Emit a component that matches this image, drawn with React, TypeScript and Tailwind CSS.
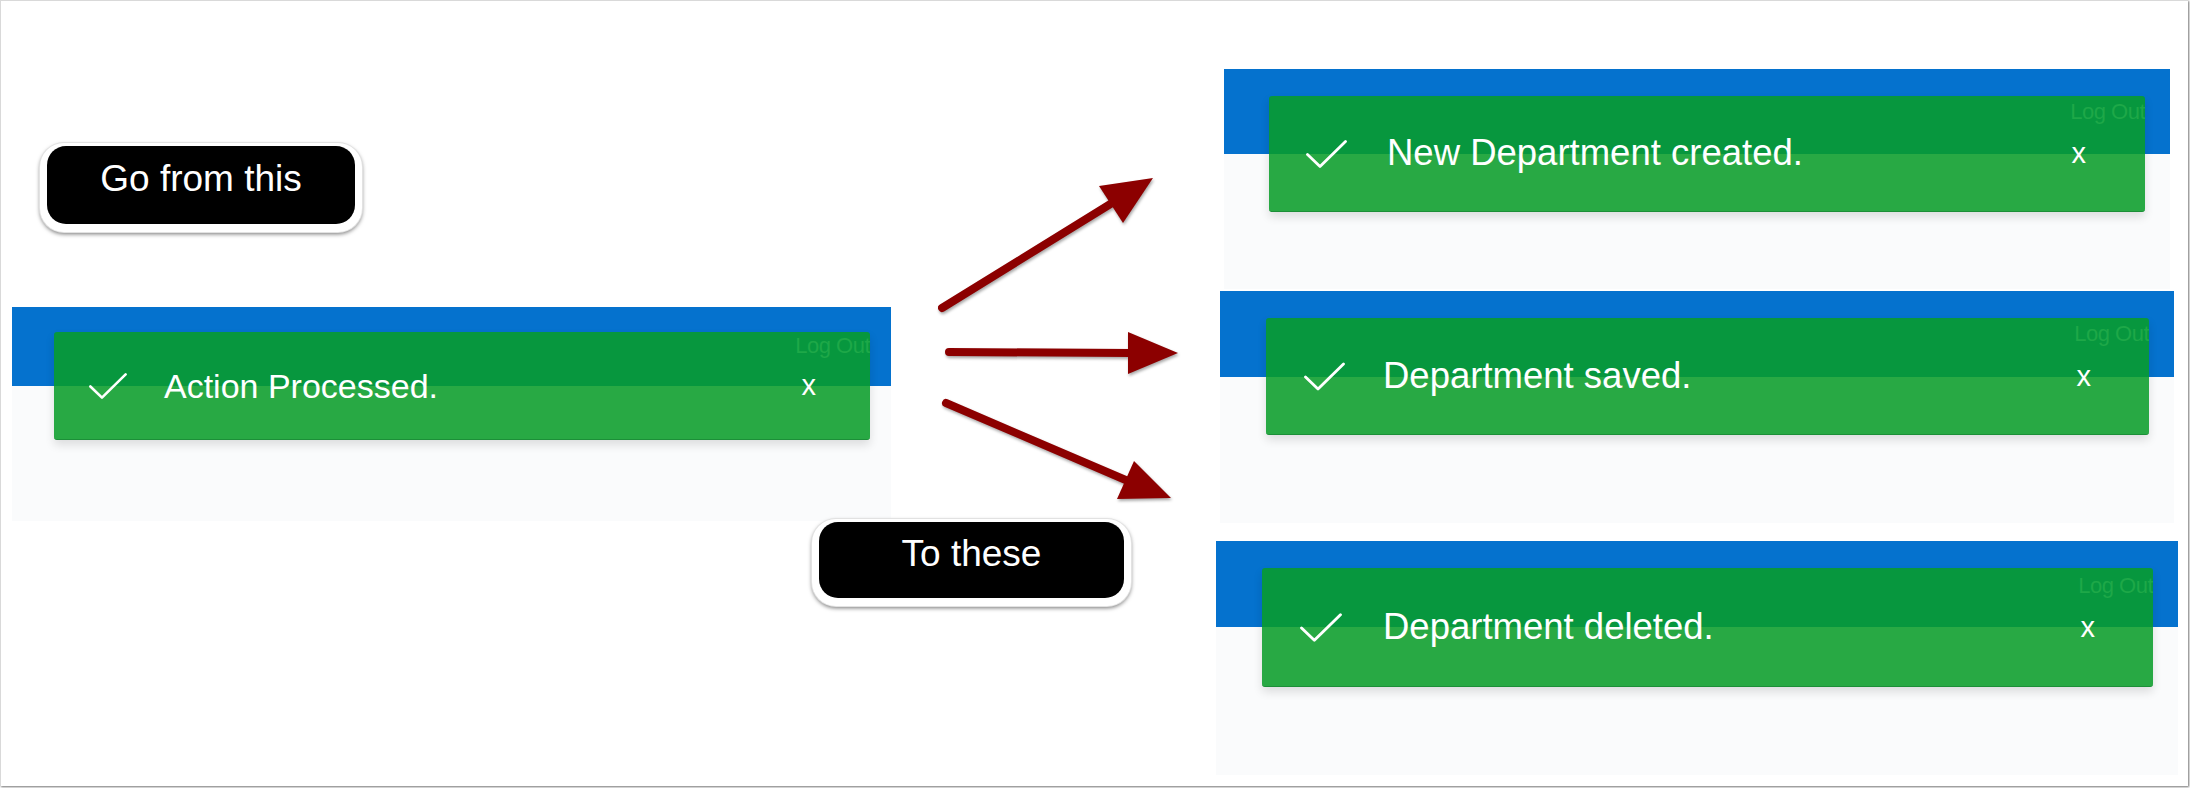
import React from "react";

type PanelProps = {
  text: string;
  panelCls: string;
  blueCls: string;
  toastCls: string;
  textCls: string;
  checkCls: string;
  closeCls: string;
  logCls: string;
};

const Check: React.FC<{ className: string }> = ({ className }) => (
  <svg viewBox="0 0 41 28" className={className} fill="none">
    <polyline
      points="1.5,14.5 14,26.5 39.5,1.5"
      stroke="white"
      strokeWidth="2.8"
      strokeLinecap="round"
      strokeLinejoin="round"
    />
  </svg>
);

const Panel: React.FC<PanelProps> = ({
  text,
  panelCls,
  blueCls,
  toastCls,
  textCls,
  checkCls,
  closeCls,
  logCls,
}) => (
  <div className={`relative bg-[#fafbfc] ${panelCls}`}>
    <div className={`bg-[#0572ce] ${blueCls}`} />
    {/* toast floats over header and page */}
    <div
      className={`absolute flex items-center overflow-hidden rounded-[3px] border-b border-[#1c8f38] bg-[rgba(8,156,40,0.87)] shadow-[0_5px_10px_rgba(0,0,0,0.12)] ${toastCls}`}
    >
      <span className={`absolute right-0 top-[3px] text-[22px] leading-none tracking-[-0.5px] text-[#1ea848] ${logCls}`}>
        Log Out
      </span>
      <Check className={`shrink-0 ${checkCls}`} />
      <p className={`flex-1 leading-none text-white ${textCls}`}>{text}</p>
      <span className={`text-[29px] leading-none text-white ${closeCls}`}>x</span>
    </div>
  </div>
);

const Callout: React.FC<{ label: string; boxCls: string }> = ({ label, boxCls }) => (
  <div className="inline-block rounded-[24px] bg-white px-[7px] pt-[3px] pb-[8px] shadow-[0_2px_4px_rgba(0,0,0,0.55)] ring-1 ring-[#e2e2e2]">
    <div
      className={`flex items-center justify-center rounded-[19px] bg-black pb-[14px] text-[37px] leading-none text-white ${boxCls}`}
    >
      {label}
    </div>
  </div>
);

const App: React.FC = () => {
  return (
    <div className="h-[788px] w-[2190px] bg-white font-['Liberation_Sans',Arial,sans-serif]">
      <div className="relative flex h-[786px] w-[2188px] border-l border-t border-[#d9d9d9] shadow-[1px_1px_2px_rgba(0,0,0,0.55)]">
        {/* left: before */}
        <div className="ml-[11px] flex flex-col">
          <div className="ml-[28px] mt-[142px]">
            <Callout label="Go from this" boxCls="h-[78px] w-[308px]" />
          </div>
          <div className="mt-[75px]">
            <Panel
              text="Action Processed."
              panelCls="h-[214px] w-[879px]"
              blueCls="h-[79px]"
              toastCls="left-[42px] right-[21px] top-[25px] h-[108px]"
              textCls="ml-[37px] text-[34px]"
              checkCls="ml-[35px] h-[28px] w-[38px]"
              closeCls="mr-[54px]"
              logCls=""
            />
          </div>
        </div>

        {/* right: after */}
        <div className="ml-[325px] mt-[68px] flex w-[962px] flex-col items-center">
          <Panel
            text="New Department created."
            panelCls="h-[220px] w-[946px]"
            blueCls="h-[85px]"
            toastCls="left-[45px] right-[25px] top-[27px] h-[116px]"
            textCls="ml-[40px] text-[36.5px]"
            checkCls="ml-[37px] h-[30px] w-[41px]"
            closeCls="mr-[59px]"
            logCls="top-[5px]"
          />
          <div className="mt-[2px]">
            <Panel
              text="Department saved."
              panelCls="h-[232px] w-[954px]"
              blueCls="h-[86px]"
              toastCls="left-[46px] right-[25px] top-[27px] h-[117px]"
              textCls="ml-[38px] text-[36.5px]"
              checkCls="ml-[38px] h-[31px] w-[41px]"
              closeCls="mr-[58px]"
              logCls="top-[5px]"
            />
          </div>
          <div className="mt-[18px]">
            <Panel
              text="Department deleted."
              panelCls="h-[234px] w-[962px]"
              blueCls="h-[86px]"
              toastCls="left-[46px] right-[25px] top-[27px] h-[119px]"
              textCls="ml-[41px] text-[36.5px]"
              checkCls="ml-[38px] h-[31px] w-[42px]"
              closeCls="mr-[58px]"
              logCls="top-[7px]"
            />
          </div>
        </div>

        {/* annotation arrows */}
        <svg
          className="pointer-events-none absolute left-[-1px] top-[-1px] h-[788px] w-[2190px] drop-shadow-[1px_2px_1.5px_rgba(0,0,0,0.35)]"
          viewBox="0 0 2190 788"
        >
          <g stroke="#8c0000" strokeWidth="8" strokeLinecap="round" fill="none">
            <line x1="942" y1="308" x2="1112" y2="203" />
            <line x1="949" y1="352" x2="1132" y2="353" />
            <line x1="946" y1="403" x2="1128" y2="481" />
          </g>
          <g fill="#8c0000">
            <polygon points="1153,178 1099,186 1123,223" />
            <polygon points="1178,353 1128,332 1128,374" />
            <polygon points="1171,498 1134,461 1117,499" />
          </g>
        </svg>

        <div className="absolute left-[811px] top-[518px]">
          <Callout label="To these" boxCls="h-[76px] w-[305px]" />
        </div>
      </div>
    </div>
  );
};

export default App;
